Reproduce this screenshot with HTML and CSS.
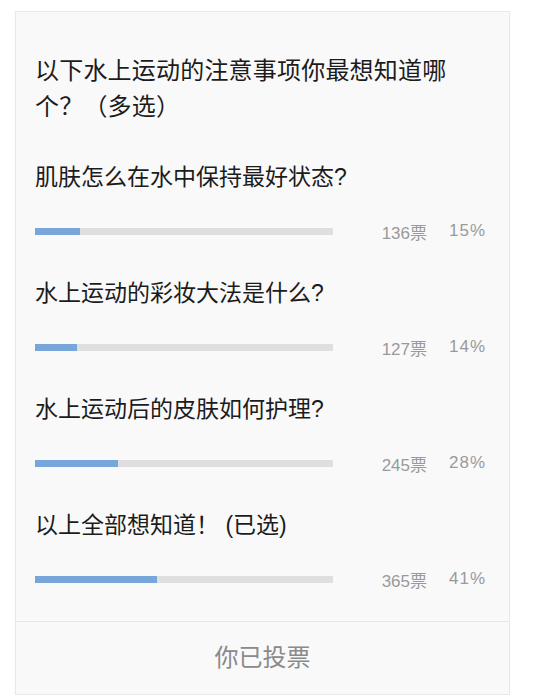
FILE: index.html
```html
<!DOCTYPE html>
<html lang="zh-CN">
<head>
    <meta charset="UTF-8">
    <meta name="viewport" content="width=device-width, initial-scale=1.0">
    <title>投票</title>
    <link rel="stylesheet" href="styles.css">
</head>
<body>

<div class="vote-card">
    <div class="vote-body">
        <h2 class="vote-title">以下水上运动的注意事项你最想知道哪个？（多选）</h2>

        <div class="option">
            <p class="option-text">肌肤怎么在水中保持最好状态?</p>
            <div class="result">
                <div class="bar"><div class="fill" style="width: 15%;"></div></div>
                <span class="count">136票</span>
                <span class="pct">15%</span>
            </div>
        </div>

        <div class="option">
            <p class="option-text">水上运动的彩妆大法是什么?</p>
            <div class="result">
                <div class="bar"><div class="fill" style="width: 14%;"></div></div>
                <span class="count">127票</span>
                <span class="pct">14%</span>
            </div>
        </div>

        <div class="option">
            <p class="option-text">水上运动后的皮肤如何护理?</p>
            <div class="result">
                <div class="bar"><div class="fill" style="width: 28%;"></div></div>
                <span class="count">245票</span>
                <span class="pct">28%</span>
            </div>
        </div>

        <div class="option">
            <p class="option-text">以上全部想知道！ (已选)</p>
            <div class="result">
                <div class="bar"><div class="fill" style="width: 41%;"></div></div>
                <span class="count">365票</span>
                <span class="pct">41%</span>
            </div>
        </div>
    </div>
    <div class="vote-footer">你已投票</div>
</div>

</body>
</html>
```

FILE: styles.css
```css
body {
    font-family: "Liberation Sans", "Noto Sans CJK SC", sans-serif;
    background-color: #fff;
    margin: 0;
    padding: 11px 0 0 15px;
}
.vote-card {
    width: 495px;
    box-sizing: border-box;
    background-color: #f9f9fa;
    border: 1px solid #e9e9ea;
    box-shadow: 0 1px 2px rgba(0, 0, 0, 0.04);
}
.vote-body {
    padding: 41px 23px 32px 19px;
}
.vote-title {
    margin: 0;
    font-size: 24px;
    font-weight: normal;
    line-height: 36px;
    letter-spacing: 0.2px;
    color: #1c1c1c;
    padding-right: 25px;
}
.option {
    margin-top: 37px;
}
.option-text {
    margin: 0;
    font-size: 23px;
    line-height: 30px;
    color: #1c1c1c;
}
.result {
    display: flex;
    align-items: center;
    height: 20px;
    margin-top: 29px;
}
.bar {
    width: 298px;
    height: 7px;
    background-color: #dfdfdf;
}
.fill {
    height: 100%;
    background-color: #78a6da;
}
.count, .pct {
    font-size: 17px;
    color: #9a9a9a;
    text-align: right;
}
.count {
    width: 94px;
}
.pct {
    width: 59px;
    letter-spacing: 1px;
}
.vote-footer {
    border-top: 1px solid #e6e6e7;
    height: 72px;
    line-height: 72px;
    text-align: center;
    font-size: 24px;
    color: #8a8a8a;
}
```
